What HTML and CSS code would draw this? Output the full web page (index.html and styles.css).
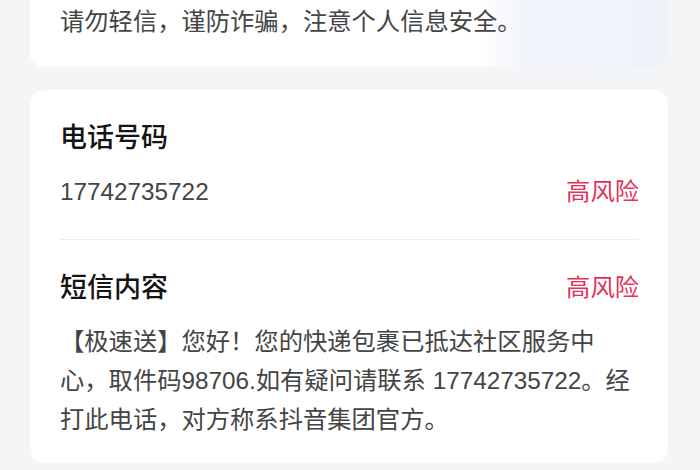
FILE: index.html
```html
<!DOCTYPE html>
<html lang="zh-CN">
<head>
<meta charset="utf-8">
<title>风险详情</title>
<link rel="stylesheet" href="styles.css">
</head>
<body>
<main class="page">
  <section class="card tip-card">
    <p class="tip-text">请勿轻信，谨防诈骗，注意个人信息安全。</p>
  </section>
  <section class="card detail-card">
    <div class="item">
      <div class="item-head">
        <h2 class="item-title">电话号码</h2>
      </div>
      <div class="item-row">
        <span class="item-value">17742735722</span>
        <span class="risk">高风险</span>
      </div>
    </div>
    <div class="divider"></div>
    <div class="item">
      <div class="item-head">
        <h2 class="item-title">短信内容</h2>
        <span class="risk">高风险</span>
      </div>
      <p class="item-body">【极速送】您好！您的快递包裹已抵达社区服务中心，取件码98706.如有疑问请联系 17742735722。经打此电话，对方称系抖音集团官方。</p>
    </div>
  </section>
</main>
</body>
</html>
```

FILE: styles.css
```css
* { box-sizing: border-box; }
html, body {
  margin: 0;
  padding: 0;
  background: #f4f5f7;
  font-family: "Liberation Sans", "Noto Sans CJK SC", sans-serif;
  color: #444;
}
.page {
  padding: 0 32px 0 30px;
  display: flex;
  flex-direction: column;
  gap: 23px;
}
.card {
  background: #fff;
  border-radius: 14px;
}
.tip-card {
  margin-top: -20px;
  padding: 22px 30px 26px;
  background: linear-gradient(90deg, #ffffff 0%, #ffffff 70%, #f2f5fb 77%, #eef3fa 100%);
}
.tip-text {
  margin: 0;
  font-size: 24.3px;
  line-height: 39px;
  color: #454545;
}
.detail-card {
  padding: 30px 29px 24px 30px;
}
.item-head {
  display: flex;
  justify-content: space-between;
  align-items: center;
  height: 36px;
}
.item-title {
  margin: 0;
  font-size: 27px;
  font-weight: 500;
  line-height: 36px;
  color: #141414;
}
.item-row {
  display: flex;
  justify-content: space-between;
  align-items: center;
  margin-top: 16px;
  line-height: 39px;
}
.item-value {
  font-size: 24.3px;
  color: #444;
}
.risk {
  font-size: 24.3px;
  line-height: 36px;
  color: #e3315a;
}
.divider {
  height: 1px;
  background: #ececec;
  margin: 28px 0 30px;
}
.item-body {
  margin: 16px 0 0;
  padding-right: 4px;
  font-size: 24.3px;
  line-height: 39px;
  color: #444;
}
```
